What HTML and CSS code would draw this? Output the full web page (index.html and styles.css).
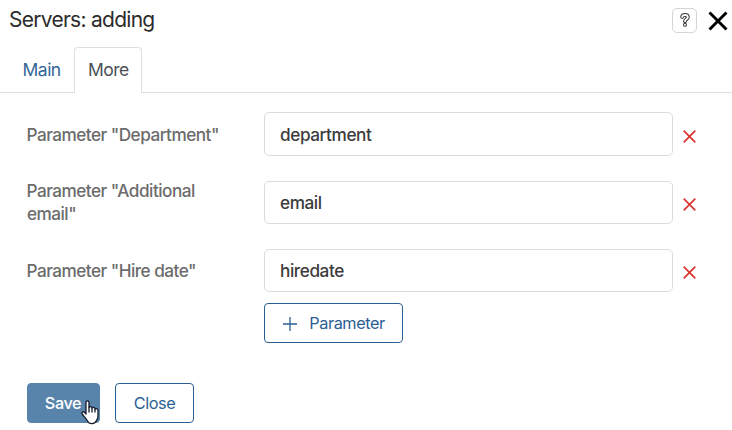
FILE: index.html
```html
<!DOCTYPE html>
<html lang="en">
<head>
<meta charset="utf-8">
<title>Servers: adding</title>
<link rel="stylesheet" href="styles.css">
</head>
<body>
<header class="header">
  <h1 class="title">Servers: adding</h1>
  <button class="help" aria-label="Help">
    <svg width="12" height="16" viewBox="0 0 12 16" fill="none" stroke-linecap="round" stroke-linejoin="round">
      <g stroke="#333" stroke-width="3.9"><path d="M3.2 4.8C3.4 2.400 8.800 2.200 8.800 5.200 8.800 7.400 6 7.200 6 9.200"/><path d="M6 12.800v.1"/></g>
      <g stroke="#fff" stroke-width="1.9"><path d="M3.2 4.8C3.4 2.400 8.800 2.200 8.800 5.200 8.800 7.400 6 7.200 6 9.200"/><path d="M6 12.800v.1"/></g>
    </svg>
  </button>
  <button class="dismiss" aria-label="Close window">
    <svg width="20" height="20" viewBox="0 0 20 20" stroke="#000" stroke-width="2.9"><path d="M1.5 1.5l17 17M18.5 1.5l-17 17"/></svg>
  </button>
</header>
<nav class="tabs">
  <a class="tab">Main</a>
  <a class="tab active">More</a>
</nav>
<main class="form">
  <div class="row">
    <label class="label" for="p1">Parameter "Department"</label>
    <input class="field tall" id="p1" value="department">
    <button class="remove" aria-label="Remove"><svg width="13" height="13" viewBox="0 0 13 13"><path d="M.7.7l11.6 11.6M12.3.7L.7 12.3"/></svg></button>
  </div>
  <div class="row">
    <label class="label" for="p2">Parameter "Additional email"</label>
    <input class="field" id="p2" value="email">
    <button class="remove" aria-label="Remove"><svg width="13" height="13" viewBox="0 0 13 13"><path d="M.7.7l11.6 11.6M12.3.7L.7 12.3"/></svg></button>
  </div>
  <div class="row">
    <label class="label" for="p3">Parameter "Hire date"</label>
    <input class="field" id="p3" value="hiredate">
    <button class="remove" aria-label="Remove"><svg width="13" height="13" viewBox="0 0 13 13"><path d="M.7.7l11.6 11.6M12.3.7L.7 12.3"/></svg></button>
  </div>
  <button class="btn add"><svg width="14" height="14" viewBox="0 0 14 14"><path d="M7 0v14M0 7h14"/></svg>Parameter</button>
</main>
<footer class="actions">
  <button class="btn primary">Save</button>
  <button class="btn close">Close</button>
  <svg class="cursor" width="18" height="25" viewBox="0 0 18 25" fill="#fff" stroke="#171b2b" stroke-width="1.3" stroke-linejoin="round" stroke-linecap="round">
    <path d="M5 14V2.5C5 .4 8 .4 8 2.5V7.600C8.300 6.100 11 6.100 11 8.100 11.500 6.900 14 7.100 14 9.100 14.700 8.100 17 8.500 17 10.500V16C17 18 16.500 19.500 15.500 20.500 14 24.500 8 24.500 6.500 21 5.500 19 3 16.500 1.200 14 .2 12.300 2 11 3.500 12.300Z"/>
    <path d="M8 7.600V12M11 8.100V12M14 9.100V12" fill="none"/>
  </svg>
</footer>
</body>
</html>
```
FILE: styles.css
```css
* {
  box-sizing: border-box;
}

body {
  margin: 0;
  height: 430px;
  overflow: hidden;
  background: #fff;
  font: 17.500px/23px Inter, "Liberation Sans", sans-serif;
  letter-spacing: -0.5px;
  color: #333;
}

button,
input {
  margin: 0;
  font: inherit;
  letter-spacing: inherit;
  background: #fff;
}

svg {
  display: block;
  flex: none;
}

.header {
  display: flex;
  align-items: center;
  height: 40px;
  padding: 0 4px 0 9px;
}

.title {
  flex: 1;
  margin: 0;
  font-size: 21px;
  font-weight: 400;
  line-height: 40px;
  letter-spacing: -0.73px;
  color: #2b2b2b;
}

.help {
  display: flex;
  align-items: center;
  justify-content: center;
  width: 25px;
  height: 25px;
  padding: 0;
  border: 1px solid #d5d5d5;
  border-radius: 5px;
}

.dismiss {
  margin: 2px 0 0 11px;
  padding: 0;
  border: 0;
}

.tabs {
  display: flex;
  height: 53px;
  padding: 7px 0 0 9px;
  border-bottom: 1px solid #dedfe2;
}

.tab {
  width: 65px;
  height: 46px;
  padding: 0 13px 0 12.500px;
  border: 1px solid transparent;
  border-bottom: 0;
  border-radius: 4px 4px 0 0;
  line-height: 44px;
  color: #346597;
}

.tab.active {
  width: 68px;
  padding-left: 13px;
  border-color: #dedfe2;
  background: #fff;
  color: #4b5057;
}

.form {
  padding: 19px 0 0 27px;
}

.row {
  display: flex;
  align-items: flex-end;
  height: 44px;
  margin-bottom: 24px;
}

.row + .row + .row {
  margin-bottom: 25px;
}

.label {
  align-self: center;
  width: 237px;
  padding-right: 40px;
  font-size: 17.200px;
  font-weight: 450;
  letter-spacing: -0.52px;
  text-indent: -0.5px;
  color: #6c6c6c;
}

.field {
  width: 409px;
  height: 43px;
  padding: 0 15px;
  border: 1px solid #dcdcde;
  border-radius: 5px;
  font-size: 17.200px;
  font-weight: 450;
  letter-spacing: -0.42px;
  color: #3c3c3c;
}

.field.tall {
  height: 44px;
}

.remove {
  margin: 0 0 13.500px 10px;
  padding: 0;
  border: 0;
}

.remove path {
  stroke: #dc3530;
  stroke-width: 1.7;
}

.btn {
  display: flex;
  align-items: center;
  justify-content: center;
  height: 40px;
  padding: 1px 0 0;
  border: 1px solid #2b6094;
  border-radius: 4px;
  font-size: 16.300px;
  letter-spacing: -0.45px;
  color: #2b6094;
}

.add {
  gap: 12px;
  width: 139px;
  margin: -14px 0 0 237px;
  padding-left: 1px;
}

.add path {
  stroke: #2b6094;
  stroke-width: 1.3;
}

.actions {
  position: relative;
  display: flex;
  gap: 15px;
  padding: 40px 0 0 27px;
}

.primary {
  width: 73px;
  padding-right: 1px;
  border-color: #5883ab;
  background: #5883ab;
  font-weight: 450;
  color: #fff;
}

.close {
  width: 79px;
}

.cursor {
  position: absolute;
  left: 81px;
  bottom: -2px;
}
```
